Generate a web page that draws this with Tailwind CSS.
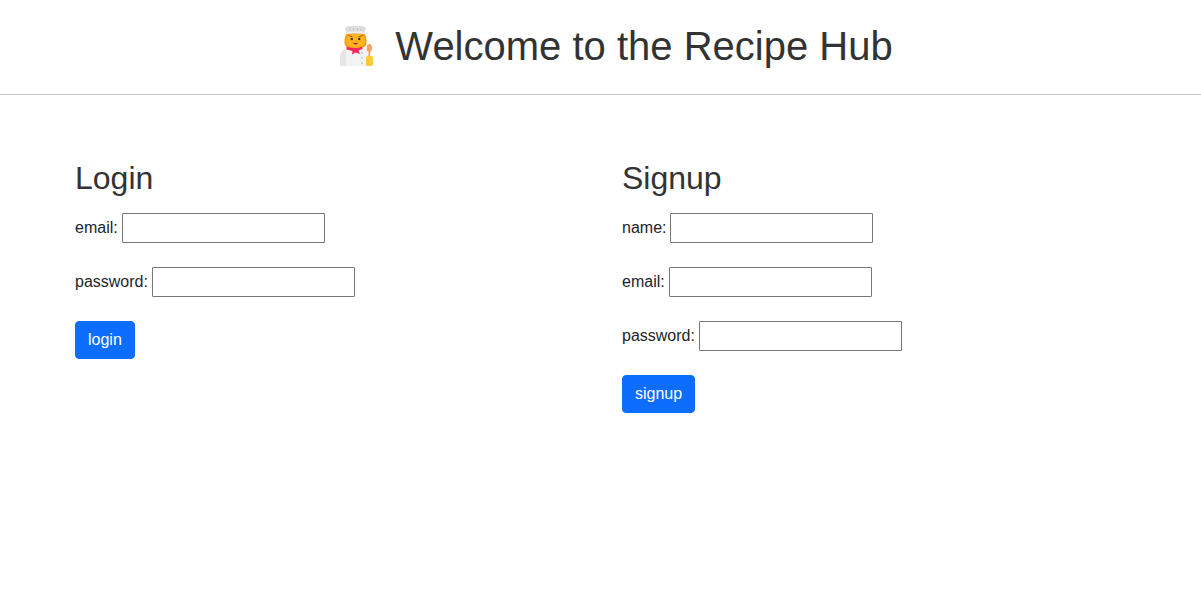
<!DOCTYPE html>
<html lang="en">
<head>
<meta charset="utf-8">
<meta name="viewport" content="width=device-width, initial-scale=1">
<title>Recipe Hub</title>
<script src="https://cdn.jsdelivr.net/npm/@tailwindcss/browser@4"></script>
</head>
<body class="bg-white font-['Liberation_Sans',Arial,sans-serif] text-base text-[#212529]">
<header class="flex items-center justify-center gap-[21px] border-b border-[#c8c8c8] pt-[22px] pb-6 pl-8">
  <svg class="h-10 w-[34px] shrink-0" viewBox="0 0 34 40" aria-hidden="true">
    <path d="M5 11Q5.500 7 9 7H22Q25.500 7 26 11L26.500 14Q27 18 25.500 20Q23 22.500 20 22H11Q8 22.500 5.500 20Q4 18 4.500 14Z" fill="#f9a01b"/>
    <path d="M6.500 13Q7 8 15.500 8Q24 8 24.500 13V17Q23 21.500 15.500 21.500Q8 21.500 6.500 17Z" fill="#ffb521"/>
    <path d="M6 5Q3.500 1 8 .3Q11-.5 15.500 0Q20-.5 23 .3Q27.500 1 25 5L24.500 8Q15.500 6.500 6.500 8Z" fill="#dedede"/>
    <path d="M9.500 2L10.500 5M13.500 2V5M17.500 2V5M21.500 2L20.500 5" stroke="#c5c5c5" stroke-width=".8"/>
    <path d="M6.300 6Q15.500 4.500 24.700 6V8Q15.500 6.500 6.300 8Z" fill="#ececec"/>
    <path d="M8.500 9.500L12.500 11M18.500 11L22.500 9.500" stroke="#80501f" stroke-width=".9"/>
    <circle cx="11.800" cy="13" r="1.200" fill="#42352b"/>
    <circle cx="19.200" cy="13" r="1.200" fill="#42352b"/>
    <path d="M15 15H16.500" stroke="#ef8c13"/>
    <path d="M12.500 16.500Q15.500 17.500 18.500 16.500Q15.500 20.500 12.500 16.500Z" fill="#bd123d"/>
    <path d="M0 40V31Q0 25 6 22.500L9 22H22L26 23Q28 25 28 30V40Z" fill="#f3f3f3"/>
    <path d="M0 40V31Q0 25 6 23V40Z" fill="#e6e6e6"/>
    <path d="M6.500 20.500Q11 22 15.500 22Q20 22 22 20.500L22.500 23L18.500 24.500L20 28L15.500 26.500L12 28.500L12.500 25L6.500 23.500Z" fill="#fb285f"/>
    <g fill="#ccc"><circle cx="22" cy="27" r="1"/><circle cx="22" cy="32" r="1"/><circle cx="22" cy="37" r="1"/></g>
    <path d="M29.300 23V33" stroke="#e99b51" stroke-width="1.600"/>
    <ellipse cx="29.300" cy="22" rx="2.700" ry="4" fill="#f0a765"/>
    <path d="M26 31.500Q26 30 28 30H31.500Q33 30 33 31.500V38Q33 40 31 40H26Z" fill="#ffca3a"/>
    <path d="M26 35H29" stroke="#f3ae23" stroke-width=".8"/>
  </svg>
  <h1 class="text-[40px] leading-[48px] text-[#333]">Welcome to the Recipe Hub</h1>
</header>
<main class="grid grid-cols-2 pt-16 pr-8 pl-[75px]">
  <form class="flex flex-col items-start gap-6">
    <h2 class="-mb-2 text-[32px] leading-[38px] text-[#333]">Login</h2>
    <div class="flex items-center gap-1">
      <label for="login-email">email:</label>
      <input id="login-email" type="email" class="h-[30px] w-[203px] rounded-[1px] border border-[#767676] px-1">
    </div>
    <div class="flex items-center gap-1">
      <label for="login-password">password:</label>
      <input id="login-password" type="password" class="h-[30px] w-[203px] rounded-[1px] border border-[#767676] px-1">
    </div>
    <button type="button" class="rounded border border-[#0d6efd] bg-[#0d6efd] px-3 py-1.5 text-white">login</button>
  </form>
  <form class="flex flex-col items-start gap-6">
    <h2 class="-mb-2 text-[32px] leading-[38px] text-[#333]">Signup</h2>
    <div class="flex items-center gap-1">
      <label for="signup-name">name:</label>
      <input id="signup-name" type="text" class="h-[30px] w-[203px] rounded-[1px] border border-[#767676] px-1">
    </div>
    <div class="flex items-center gap-1">
      <label for="signup-email">email:</label>
      <input id="signup-email" type="email" class="h-[30px] w-[203px] rounded-[1px] border border-[#767676] px-1">
    </div>
    <div class="flex items-center gap-1">
      <label for="signup-password">password:</label>
      <input id="signup-password" type="password" class="h-[30px] w-[203px] rounded-[1px] border border-[#767676] px-1">
    </div>
    <button type="button" class="rounded border border-[#0d6efd] bg-[#0d6efd] px-3 py-1.5 text-white">signup</button>
  </form>
</main>
</body>
</html>
